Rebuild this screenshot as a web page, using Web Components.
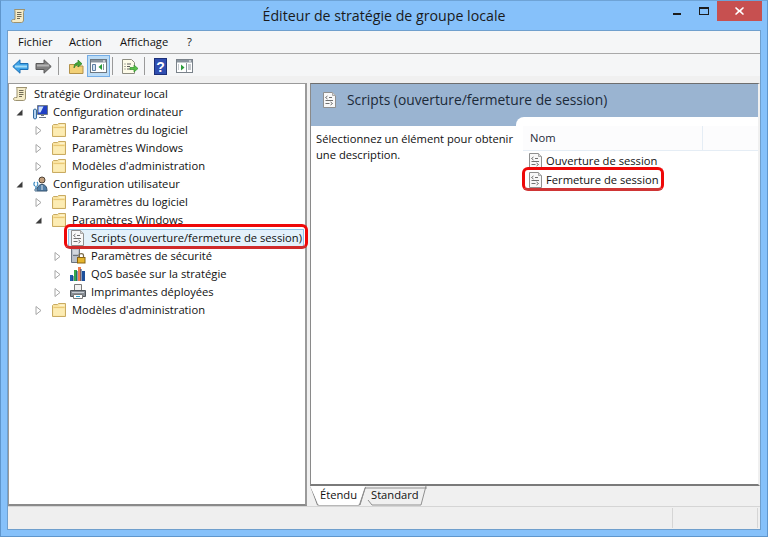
<!DOCTYPE html>
<html lang="fr"><head><meta charset="utf-8"><title>Éditeur de stratégie de groupe locale</title>
<style>
html,body{margin:0;padding:0;width:768px;height:537px;overflow:hidden;background:#86c1fa}
body{font:11.2px "Open Sans","Noto Sans",sans-serif;color:#000}
</style></head><body>
<gpe-window>
  <gpe-titlebar slot="title">Éditeur de stratégie de groupe locale</gpe-titlebar>
  <gpe-menubar slot="client"><span style="width:51px">Fichier</span><span style="width:51px">Action</span><span style="width:67px">Affichage</span><span>?</span></gpe-menubar>
  <gpe-toolbar slot="client"></gpe-toolbar>
  <gpe-panes slot="client">
    <gpe-tree slot="left">
      <tree-row level="0" icon="scroll">Stratégie Ordinateur local</tree-row>
      <tree-row level="1" exp="open" icon="computer">Configuration ordinateur</tree-row>
      <tree-row level="2" exp="closed" icon="folder">Paramètres du logiciel</tree-row>
      <tree-row level="2" exp="closed" icon="folder">Paramètres Windows</tree-row>
      <tree-row level="2" exp="closed" icon="folder">Modèles d'administration</tree-row>
      <tree-row level="1" exp="open" icon="user">Configuration utilisateur</tree-row>
      <tree-row level="2" exp="closed" icon="folder">Paramètres du logiciel</tree-row>
      <tree-row level="2" exp="open" icon="folder">Paramètres Windows</tree-row>
      <tree-row level="3" icon="script" selected>Scripts (ouverture/fermeture de session)</tree-row>
      <tree-row level="3" exp="closed" icon="security">Paramètres de sécurité</tree-row>
      <tree-row level="3" exp="closed" icon="qos">QoS basée sur la stratégie</tree-row>
      <tree-row level="3" exp="closed" icon="printer">Imprimantes déployées</tree-row>
      <tree-row level="2" exp="closed" icon="folder">Modèles d'administration</tree-row>
    </gpe-tree>
    <gpe-details slot="right" heading="Scripts (ouverture/fermeture de session)">
      <span slot="desc">Sélectionnez un élément pour obtenir une description.</span>
      <list-row slot="list">Ouverture de session</list-row>
      <list-row slot="list" marked>Fermeture de session</list-row>
    </gpe-details>
  </gpe-panes>
  <gpe-statusbar slot="client"></gpe-statusbar>
</gpe-window>
<script>
const ICONS={
scroll:`<path d="M3.500 1.500h10.500c-1 .8-1.500 1.800-1.500 3v7.500c0 1.500-.8 2.500-2.200 2.500H2.500c-1.200 0-2-.6-2-1.500s.8-1.500 2-1.500H4V4c0-1-.2-1.800-.5-2.500z" fill="#f5ecc8" stroke="#9c9270"/><path d="M6 4.500h4.500M6 6.500h4.500M6 8.500h4.500M6 10.500h3" stroke="#6f6a58"/>`,
folder:`<path d="M1.500 3.500l1-1h4l1-1h7v13h-13z" fill="#f9e3a0" stroke="#c9ab62"/><path d="M8.500 2.500h5v1.500h-5z" fill="#fdf3cf"/><path d="M2.500 5.500h11" stroke="#e9c877"/><path d="M2.500 6.500h11v7h-11z" fill="#fcecb4"/>`,
computer:`<path d="M1.500 6c0-1.200 3-1.200 3 0v8c0 1.200-3 1.200-3 0z" fill="#b8d4ee" stroke="#356da3"/><path d="M5.500 1.500h10v9h-10z" fill="#1f3fc4" stroke="#6e7a88"/><path d="M6.500 2.500h5l-3 6h-2z" fill="#cfe3fa"/><path d="M9 11.500h3M7 13.500h7" stroke="#6a7686" stroke-width="1.200"/>`,
user:`<circle cx="10" cy="4" r="3" fill="#c2a07e" stroke="#4e4237"/><path d="M5 15c0-4.500 2-6.500 5-6.500s5 2 5 6.500z" fill="#527fa8" stroke="#34526e"/><path d="M10 9v5" stroke="#dfe8f0"/><path d="M3 6c-1.500 1-1.500 3 0 4M5 6c1 1 1 3 0 4" fill="none" stroke="#3f8cc0" stroke-width="1.200"/><path d="M4 10v3" stroke="#3f8cc0" stroke-width="1.500"/><circle cx="4" cy="14" r="1.200" fill="#e4edf5" stroke="#43698b"/>`,
script:`<path d="M1.500 .5h9l3 3v12h-12z" fill="#f8f8f8" stroke="#8f8f8f"/><path d="M10.500 .5v3h3" fill="#d8d8d8" stroke="#a8a8a8"/><path d="M5.500 4L3.500 5.500l2 1.500M7 5.500h3M3.500 8.500h7.500M8.500 10L10.500 11.500 8.500 13M3.500 11.500h4" fill="none" stroke="#707070"/>`,
security:`<path d="M1.500 .5h8v14h-8z" fill="#b9bfc8" stroke="#6b7480"/><path d="M3 3h5M3 5h5" stroke="#edf0f3"/><path d="M3 7.500h5" stroke="#6b7480"/><rect x="7.500" y="9.500" width="7.500" height="5.500" fill="#e6b62e" stroke="#8c6410"/><path d="M9 9.500V7.500c0-2.500 4.500-2.500 4.500 0v2" fill="none" stroke="#7a6a48" stroke-width="1.200"/>`,
qos:`<rect x="0" y="9" width="3" height="6" fill="#1c5fae"/><rect x="4" y="4" width="3" height="11" fill="#35a84a"/><rect x="8" y="1" width="3" height="14" fill="#ee7d50"/><rect x="12" y="5" width="3" height="10" fill="#1d4f9c"/><path d="M3 15V10M7 15V5M11 15V3" stroke="#123a70"/>`,
printer:`<path d="M4.500 .5h7v6h-7z" fill="#f2f2f2" stroke="#7a7a7a"/><path d="M.5 6.500h15v6H.5z" fill="#878d94" stroke="#50565c"/><path d="M2 8.500h12" stroke="#c9ced4"/><path d="M3.500 10.500h9v4h-9z" fill="#fff" stroke="#777"/><path d="M6 12.500h4" stroke="#28a2d0"/>`,
back:`<path d="M8 .8L.8 7.500 8 14.200v-3.700h8v-6H8z" fill="#3ea3e8" stroke="#1c6fb4"/><path d="M3 7.500h12" stroke="#a4dcf8" stroke-width="2"/>`,
forward:`<path d="M9 .8l7.200 6.700L9 14.200v-3.700H1v-6h8z" fill="#7f7f7f" stroke="#5a5a5a"/><path d="M2 6.500h12" stroke="#b4b4b4" stroke-width="2"/>`,
up:`<path d="M1.500 5.500h6l1.500 1.500h6v7.500H1.500z" fill="#f2d076" stroke="#b3924a"/><path d="M6 9c0-3.500 1-5 4-5.500V1l4 3.800-4 3.200V5.800C8 6 7 7 6 9z" fill="#46a83a" stroke="#2c7c27" stroke-width=".7"/>`,
toggle:`<rect x=".5" y=".5" width="16" height="13" fill="#fff" stroke="#6d7780"/><path d="M1 1h15v2.500H1z" fill="#8a949e"/><path d="M13 2h2" stroke="#fff"/><path d="M2.500 5.500h3v6h-3z" fill="#d6e4f2" stroke="#5d7fa4"/><path d="M12 5v6L8.500 8z" fill="#2a9c3a"/><path d="M13.500 5v6" stroke="#8a949e"/>`,
export:`<path d="M1.500 .5h9l3 3v11h-12z" fill="#fdfbe8" stroke="#8c8c80"/><path d="M3.500 5h1M6 5h4M3.500 7.500h1M6 7.500h3M3.500 10h1M6 10h3" stroke="#5c5c5c"/><path d="M9 8.500h4V6l4 3.500-4 3.500v-2.500H9z" fill="#58c048" stroke="#318f2c" stroke-width=".7"/>`,
help:`<rect x=".5" y=".5" width="12" height="16" fill="#2f4eb0" stroke="#1c2f78"/><text x="6.500" y="13.500" text-anchor="middle" font-family="Liberation Sans" font-weight="700" font-size="14" fill="#fff">?</text>`,
showpane:`<rect x=".5" y=".5" width="16" height="13" fill="#fff" stroke="#7a828a"/><path d="M1 1h15v2.500H1z" fill="#8a949e"/><path d="M13 2h2" stroke="#fff"/><path d="M5 5.500v6L8.500 8.500z" fill="#2a9c3a"/><path d="M10.500 4v9" stroke="#8a949e"/><path d="M12 6h3M12 8h3M12 10h3M2 6h1M2 8h1M2 10h1" stroke="#8a949e"/>`
};
function def(name,css,html){
  customElements.define(name,class extends HTMLElement{
    connectedCallback(){
      if(this.shadowRoot)return;
      const s=this.attachShadow({mode:'open'});
      s.innerHTML=`<style>${css}</style>`+(typeof html==='function'?html(this):html);
    }
  });
}
def('app-icon',':host{display:block;line-height:0}svg{display:block;overflow:visible}',
  h=>{const w=h.getAttribute('w')||16,ht=h.getAttribute('h')||16;
  return `<svg width="${w}" height="${ht}" viewBox="0 0 ${w} ${ht}">${ICONS[h.getAttribute('name')]}</svg>`});
def('gpe-window',`:host{display:flex;flex-direction:column;box-sizing:border-box;width:768px;height:537px;border:1px solid #5f96cc;border-top-color:#6ea3d6;background:#86c1fa}
  .client{display:flex;flex-direction:column;flex:1;margin:0 6px 6px 6px;border:1px solid #6f9fcd;background:#f0f0f0;min-height:0}`,
  `<slot name="title"></slot><div class="client"><slot name="client"></slot></div>`);
def('gpe-titlebar',`:host{display:block;height:29px;flex:none}
  .row{display:grid;grid-template-columns:1fr auto 1fr;height:29px;align-items:start}
  .ic{margin:7px 0 0 10px;justify-self:start}
  .t{text-align:center;font-size:14.2px;line-height:29px;color:#1a1a1a}
  .ctl{display:flex;justify-self:end;align-items:flex-start;margin-right:5px}
  .min{width:8px;height:2px;background:#1c1c1c;margin:12px 18px 0 0}
  .max{box-sizing:border-box;width:10px;height:8px;border:1px solid #1c1c1c;border-top-width:2px;margin:6px 8px 0 0}
  .cl{width:45px;height:20px;background:#c75050;display:flex;align-items:center;justify-content:center}`,
  `<div class="row"><app-icon class="ic" name="scroll"></app-icon><div class="t"><slot></slot></div>
   <div class="ctl"><div class="min"></div><div class="max"></div><div class="cl"><svg width="9" height="8" viewBox="0 0 9 8"><path d="M1 0l3.500 3L8 0l1 1-3 3 3 3-1 1-3.500-3L1 8 0 7l3-3-3-3z" fill="#fff"/></svg></div></div></div>`);
def('gpe-menubar',`:host{display:flex;flex:none;box-sizing:border-box;height:23px;background:#f5f6f7;border-bottom:1px solid #a9a9a9;padding-left:10px;line-height:22px;color:#111}
  ::slotted(span){display:block}`,`<slot></slot>`);
def('gpe-toolbar',`:host{display:block;flex:none;height:29px;background:#f0f0f0}
  .bar{display:flex;align-items:center;height:24px;background:linear-gradient(#f5f6f7 22px,#f0f0f0 22px);padding-left:4px}
  app-icon{flex:none}
  .sep{width:1px;height:18px;background:#9a9a9a;flex:none}
  .tog{box-sizing:border-box;width:23px;height:22px;background:#bcdcf6;border:1px solid #74ade6;display:flex;align-items:center;justify-content:center;flex:none}`,
  `<div class="bar">
    <app-icon name="back" w="17" h="15"></app-icon>
    <app-icon name="forward" w="17" h="15" style="margin-left:6px"></app-icon>
    <div class="sep" style="margin-left:6px"></div>
    <app-icon name="up" w="16" h="15" style="margin-left:9px"></app-icon>
    <div class="tog" style="margin-left:3px"><app-icon name="toggle" w="17" h="14"></app-icon></div>
    <div class="sep" style="margin-left:2px"></div>
    <app-icon name="export" w="17" h="15" style="margin-left:8px"></app-icon>
    <div class="sep" style="margin-left:6px"></div>
    <app-icon name="help" w="13" h="17" style="margin-left:9px"></app-icon>
    <app-icon name="showpane" w="17" h="14" style="margin-left:9px"></app-icon>
  </div>`);
def('gpe-panes',`:host{display:flex;flex:1;min-height:0;background:#f0f0f0}
  .l{width:299px;flex:none;display:flex}.r{flex:1;display:flex;margin-left:3px;min-width:0}
  ::slotted(*){flex:1;min-width:0}`,
  `<div class="l"><slot name="left"></slot></div><div class="r"><slot name="right"></slot></div>`);
def('gpe-tree',`:host{display:block;box-sizing:border-box;background:#fff;border:1px solid #9a9a9a;border-width:1px 2px 2px 1px;padding:1px 0 0 0;border-bottom-color:#8a8a8a}`,`<slot></slot>`);
def('tree-row',`:host{display:block;height:18px;position:relative;box-sizing:border-box;white-space:nowrap}
  .r{display:flex;align-items:center;height:18px}
  .x{width:18px;flex:none;display:flex;align-items:center;justify-content:flex-start;padding-left:2px;box-sizing:border-box}
  .i{flex:none;margin-right:5px}
  .t{line-height:18px;color:#111}
  :host([selected]) .sel{position:absolute;left:59px;right:1px;top:0;bottom:0;border:1px solid #8cc4ea;background:#e3f1fb;z-index:0}
  :host([selected]) .r{position:relative;z-index:1}
  :host([selected]) .mark{position:absolute;left:55px;right:-3px;top:-5px;bottom:-2px;border:3px solid #ee0808;border-bottom-color:#cf2a2a;border-radius:6px;z-index:2}`,
  h=>{const L=+h.getAttribute('level'),e=h.getAttribute('exp');
   const pad=L===0?4:5+(L-1)*19;
   const arrow=e==='open'?`<svg width="7" height="7" viewBox="0 0 7 7"><path d="M6.500 .5v6h-6z" fill="#3c3c3c"/></svg>`:e==='closed'?`<svg width="7" height="9" viewBox="0 0 7 9"><path d="M1 .5l5 4-5 4z" fill="#fff" stroke="#a6a6a6"/></svg>`:'';
   return `<div class="sel"></div><div class="mark"></div><div class="r" style="padding-left:${pad}px">${L>0?`<div class="x">${arrow}</div>`:''}<app-icon class="i" name="${h.getAttribute('icon')}"></app-icon><span class="t"><slot></slot></span></div>`});
def('gpe-details',`:host{display:flex;flex-direction:column;min-width:0}
  .frame{flex:none;height:403px;box-sizing:border-box;border-top:1px solid #6e6e6e;border-left:1px solid #8a8a8a;border-bottom:2px solid #7a7a7a;border-right:2px solid #f0f0f0;background:#fff;display:flex;flex-direction:column}
  .head{flex:none;height:42px;background:#9ab4d1;display:flex;align-items:flex-start;padding-left:11px;box-sizing:border-box}
  .head app-icon{margin-top:8px}
  .head span{font-size:13.8px;line-height:32px;margin-left:9px;color:#1c2a38}
  .body{flex:1;display:flex;min-height:0}
  .desc{flex:none;width:205px;box-sizing:border-box;padding:5px 0 0 5px;line-height:16px;color:#111}
  .list{flex:1;background:#fff;margin-top:-9px;border-top-left-radius:8px;padding:9px 0 0 7px}
  .colh{display:flex;height:25px;background:#fcfcfd;border-bottom:1px solid #e5edf5;line-height:24px;box-sizing:border-box}
  .colh b{font-weight:400;width:180px;box-sizing:border-box;padding-left:7px;border-right:1px solid #e5edf5;color:#1e2a3a}`,
  h=>`<div class="frame"><div class="head"><app-icon name="script"></app-icon><span>${h.getAttribute('heading')}</span></div>
    <div class="body"><div class="desc"><slot name="desc"></slot></div>
    <div class="list"><div class="colh"><b>Nom</b></div><div><slot name="list"></slot></div></div></div></div>
    <gpe-tabs></gpe-tabs>`);
def('list-row',`:host{display:block;height:19px;position:relative;white-space:nowrap}
  .r{display:flex;align-items:center;height:19px;padding-left:5px}
  app-icon{margin-right:2px}
  span{line-height:19px;color:#111}
  :host([marked]) .m{position:absolute;left:-1px;width:142px;top:-3px;height:24px;box-sizing:border-box;border:3px solid #ee0808;border-bottom-color:#cf3535;border-radius:6px}`,
  `<div class="r"><app-icon name="script"></app-icon><span><slot></slot></span></div><div class="m"></div>`);
def('gpe-tabs',`:host{display:block;flex:none;height:20px;position:relative}
  .w{display:flex;height:20px}
  .tab{position:relative;height:19px;line-height:18px;flex:none;color:#111}
  .a{width:55px;padding-left:10px;box-sizing:border-box;background:#fff;clip-path:polygon(0 0,100% 0,88% 100%,16% 100%);z-index:1}
  .s{width:62px;padding-left:7px;box-sizing:border-box;margin-left:-1px}
  svg{position:absolute;left:0;top:0}
  .tx{position:relative}`,
  `<div class="w"><div class="tab a"><span class="tx">Étendu</span></div><div class="tab s"><span class="tx">Standard</span></div></div>
   <svg width="130" height="20" viewBox="0 0 130 20"><path d="M.5 0l7 19h42l6-18" fill="none" stroke="#808080"/><path d="M50 19l5-17h62M58 14l4 5h49l5-19" fill="none" stroke="#909090"/></svg>`);
def('gpe-statusbar',`:host{display:flex;flex:none;box-sizing:border-box;height:23px;border-top:1px solid #d5d5d5;background:#efefef;padding:1px 2px 1px 0}
  .a{flex:1}.b{width:84px;border-left:1px solid #d5d5d5}.c{border-left:1px solid #d5d5d5}`,
  `<div class="a"></div><div class="b"></div><div class="c"></div>`);
</script>
</body></html>
